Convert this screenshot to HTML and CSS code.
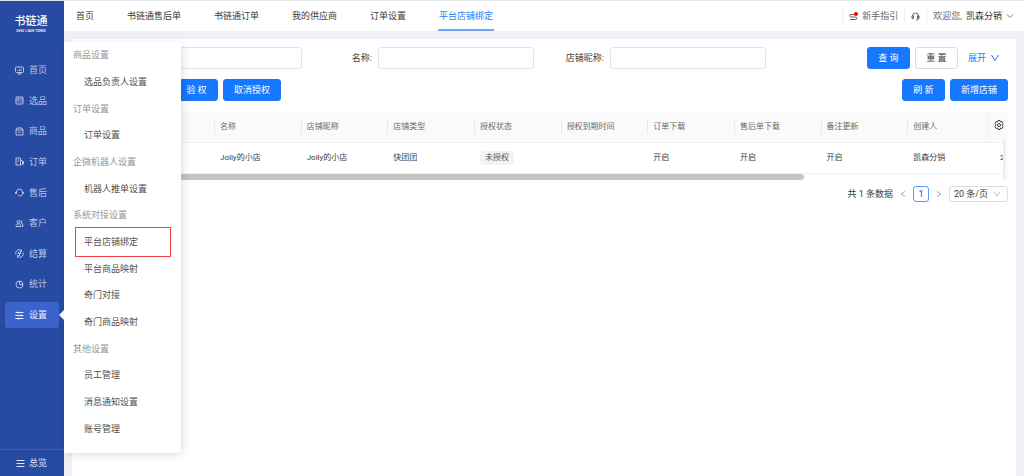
FILE: index.html
```html
<!DOCTYPE html>
<html lang="zh-CN">
<head>
<meta charset="utf-8">
<title>平台店铺绑定</title>
<link rel="stylesheet" href="styles.css">
</head>
<body>
<div class="app">
  <aside class="sidebar">
    <div class="logo"><span class="logo-name">书链通</span><span class="logo-sub">SHU LIAN TONG</span></div>
    <nav class="menu">
      <a class="menu-item" href="#"><svg class="icon" viewBox="0 0 18 18"><rect x="1" y="2" width="16" height="11" rx="2"/><path d="M5 16h8M9 13v3M6 8v2M9 7v3M12 5v5"/></svg>首页</a>
      <a class="menu-item" href="#"><svg class="icon" viewBox="0 0 18 18"><rect x="2" y="2" width="14" height="14" rx="1"/><path d="M2 6h14M5 9h3M5 12h2M9 11l2 2 3-4"/></svg>选品</a>
      <a class="menu-item" href="#"><svg class="icon" viewBox="0 0 18 18"><path d="M4 2h10l2 4v10H2V6zM2 6h14M6 9c1 3 5 3 6 0"/></svg>商品</a>
      <a class="menu-item" href="#"><svg class="icon" viewBox="0 0 18 18"><path d="M2 2h9v14H2zM5 6h3M5 9h2M11 6l4 2v6l-2 2h-2M15 9h2v5h-2"/></svg>订单</a>
      <a class="menu-item" href="#"><svg class="icon" viewBox="0 0 18 18"><path d="M3 11V8a6 6 0 0 1 12 0v3c0 3-2 5-6 5M1 8v3h2M17 8v3h-2M6 13l3 3"/></svg>售后</a>
      <a class="menu-item" href="#"><svg class="icon" viewBox="0 0 18 18"><circle cx="7" cy="6" r="3"/><path d="M2 15c0-7 10-7 10 0zM11 3c4 0 4 5 1 5 3 0 4 3 4 7h-2"/></svg>客户</a>
      <a class="menu-item" href="#"><svg class="icon" viewBox="0 0 18 18"><path d="M2 11a7 7 0 0 1 11-8M16 7a7 7 0 0 1-11 8M13 1v4H9M5 17v-4h4M6 6l3 3 3-3M6 9h6M9 9v4"/></svg>结算</a>
      <a class="menu-item" href="#"><svg class="icon" viewBox="0 0 18 18"><circle cx="9" cy="9" r="7"/><path d="M9 2v7h7"/></svg>统计</a>
      <a class="menu-item active" href="#"><svg class="icon" viewBox="0 0 18 18"><path d="M1 3h16M1 9h16M1 15h16M6 1v4M12 7v4M7 13v4"/></svg>设置</a>
    </nav>
    <a class="overview" href="#"><svg class="icon" viewBox="0 0 18 18"><path d="M1 3h16M1 9h16M1 15h16"/></svg>总览</a>
    <nav class="flyout">
      <span class="group">商品设置</span>
      <a href="#">选品负责人设置</a>
      <span class="group">订单设置</span>
      <a href="#">订单设置</a>
      <span class="group">企微机器人设置</span>
      <a href="#">机器人推单设置</a>
      <span class="group">系统对接设置</span>
      <a class="marked" href="#">平台店铺绑定</a>
      <a href="#">平台商品映射</a>
      <a href="#">奇门对接</a>
      <a href="#">奇门商品映射</a>
      <span class="group">其他设置</span>
      <a href="#">员工管理</a>
      <a href="#">消息通知设置</a>
      <a href="#">账号管理</a>
    </nav>
  </aside>
  <div class="main">
    <header class="topbar">
      <nav class="tabs">
        <a href="#">首页</a>
        <a href="#">书链通售后单</a>
        <a href="#">书链通订单</a>
        <a href="#">我的供应商</a>
        <a href="#">订单设置</a>
        <a class="current" href="#">平台店铺绑定</a>
      </nav>
      <div class="tools">
        <a class="tool" href="#"><svg class="icon" viewBox="0 0 18 18"><path d="M12 5H4a2 2 0 0 0 0 5h9a2 2 0 0 1 0 5H2"/><circle class="dot" cx="14" cy="4" r="4"/></svg>新手指引</a>
        <button class="tool" aria-label="客服"><svg class="icon" viewBox="0 0 18 18"><path d="M3 8a6 6 0 0 1 12 0v5c0 2-2 3-5 3M2 8h3v5H2zM13 8h3v5h-3z"/></svg></button>
        <button class="tool user"><span>欢迎您,</span><strong>凯森分销</strong><svg class="chevron" viewBox="0 0 16 16"><path d="M2 5l6 6 6-6"/></svg></button>
      </div>
    </header>
    <main class="panel">
      <form class="filters">
        <div class="field"><input type="text" aria-label="筛选"></div>
        <div class="field"><label for="name">名称:</label><input id="name" type="text"></div>
        <div class="field"><label for="nick">店铺昵称:</label><input id="nick" type="text"></div>
        <div class="field submit">
          <button class="btn primary" type="button">查 询</button>
          <button class="btn" type="button">重 置</button>
          <a class="expand" href="#">展开<svg class="chevron" viewBox="0 0 16 16"><path d="M1 2l7 11 7-11"/></svg></a>
        </div>
      </form>
      <div class="actions">
        <button class="btn primary">验 权</button>
        <button class="btn primary">取消授权</button>
        <button class="btn primary push">刷 新</button>
        <button class="btn primary">新增店铺</button>
      </div>
      <div class="table-wrap">
        <table>
          <colgroup><col class="col-first"><col span="9"><col class="col-last"></colgroup>
          <thead>
            <tr><th></th><th>名称</th><th>店铺昵称</th><th>店铺类型</th><th>授权状态</th><th>授权到期时间</th><th>订单下载</th><th>售后单下载</th><th>备注更新</th><th>创建人</th><th></th></tr>
          </thead>
          <tbody>
            <tr><td></td><td>Jolly的小店</td><td>Jolly的小店</td><td>快团团</td><td><span class="tag">未授权</span></td><td></td><td>开启</td><td>开启</td><td>开启</td><td>凯森分销</td><td>2</td></tr>
          </tbody>
        </table>
        <div class="scrollbar"><div class="thumb"></div></div>
        <div class="edge"></div>
        <button class="gear" aria-label="列设置"><svg viewBox="0 0 20 20"><path d="M8 1h4l1 3 3-1 2 4-2 3 2 3-2 4-3-1-1 3H8l-1-3-3 1-2-4 2-3-2-3 2-4 3 1z"/><circle cx="10" cy="10" r="3"/></svg></button>
      </div>
      <div class="pagination">
        <span>共 1 条数据</span>
        <button class="arrow" aria-label="上一页"><svg class="chevron" viewBox="0 0 16 16"><path d="M12 3L4 8l8 5"/></svg></button>
        <button class="page">1</button>
        <button class="arrow" aria-label="下一页"><svg class="chevron" viewBox="0 0 16 16"><path d="M4 3l8 5-8 5"/></svg></button>
        <div class="size"><select aria-label="每页条数"><option>20 条/页</option></select><svg class="chevron" viewBox="0 0 16 16"><path d="M2 4l6 8 6-8"/></svg></div>
      </div>
    </main>
  </div>
</div>
</body>
</html>
```
FILE: styles.css
```css
* { box-sizing: border-box; }

body {
  margin: 0;
  border-top: 1px solid #e4e5e8;
  font: 9px/14px Roboto, "Noto Sans CJK SC", sans-serif;
  color: #3c3c3c;
  background: #eef0f5;
}

a { color: inherit; text-decoration: none; }
button, input, select { font: inherit; color: inherit; margin: 0; }
button { background: none; border: 0; padding: 0; }
svg { fill: none; stroke: currentColor; flex: none; }

.app { display: flex; min-height: calc(100vh - 1px); }
.icon { width: 9px; height: 9px; stroke-width: 2; }
.chevron { width: 8px; height: 8px; stroke-width: 2; }

/* Sidebar */
.sidebar {
  position: relative;
  z-index: 2;
  flex: none;
  width: 64px;
  display: flex;
  flex-direction: column;
  background: #274ba3;
  color: #b9c6e6;
}
.logo {
  height: 56px;
  padding-top: 14px;
  padding-right: 2px;
  display: flex;
  flex-direction: column;
  align-items: center;
  color: #fff;
}
.logo-name { font-size: 11px; line-height: 14px; font-weight: 500; }
.logo-sub { font-size: 4px; line-height: 4px; font-weight: 500; }
.menu {
  height: 271px;
  padding: 0 5px;
  display: flex;
  flex-direction: column;
  justify-content: space-between;
}
.menu-item {
  position: relative;
  height: 26px;
  padding-left: 10px;
  display: flex;
  align-items: center;
  gap: 5px;
  border-radius: 3px;
}
.menu-item.active { background: #3b63cc; color: #e8edfa; }
.menu-item.active::after {
  content: "";
  position: absolute;
  right: -5px;
  top: 8px;
  border: 5px solid transparent;
  border-left: 0;
  border-right-color: #fff;
}
.overview {
  margin-top: auto;
  height: 27px;
  padding-left: 16px;
  display: flex;
  align-items: center;
  gap: 4px;
  border-top: 1px solid #3f60b0;
  color: #dfe6f5;
}

.flyout {
  position: absolute;
  left: 64px;
  top: 41px;
  width: 117px;
  height: 411px;
  padding: 0 9px 11px;
  display: grid;
  grid-auto-rows: 1fr;
  align-items: center;
  background: #fff;
  border-radius: 0 3px 3px 0;
  box-shadow: 2px 2px 8px rgba(0, 0, 0, 0.12);
  color: #505050;
}
.flyout .group { color: #969696; }
.flyout a { padding-left: 11px; }
.flyout .marked { position: relative; }
.flyout .marked::after {
  content: "";
  position: absolute;
  inset: -8px 1px -8px 2px;
  border: 1px solid #f04040;
}

/* Top bar */
.main { flex: 1; min-width: 0; display: flex; flex-direction: column; }
.topbar {
  height: 30px;
  display: flex;
  justify-content: space-between;
  padding: 0 10px 0 11px;
  background: #fff;
}
.tabs { display: flex; gap: 31px; }
.tabs a { padding: 8px 1px 0; white-space: nowrap; }
.tabs .current { color: #2a7bf6; border-bottom: 2px solid #6aa5fb; }
.tools { display: flex; align-items: center; color: #666; }
.tool {
  display: flex;
  align-items: center;
  gap: 4px;
  height: 14px;
  padding: 0 6px;
  border-left: 1px solid #eee;
}
.dot { fill: #f00; stroke: none; }
.user { padding-right: 0; }
.user strong { font-weight: 400; color: #333; }
.user .chevron { color: #888; }

/* Content */
.panel { flex: 1; margin: 8px 8px 0; padding: 8px; background: #fff; }
.filters { display: grid; grid-template-columns: repeat(4, 1fr); }
.field {
  display: flex;
  align-items: center;
  justify-content: flex-end;
  gap: 6px;
  padding-right: 10px;
}
.field input {
  width: 156px;
  height: 22px;
  padding: 0 6px;
  border: 1px solid #e4e4e4;
  border-radius: 3px;
  background: #fff;
}
.submit { gap: 5px; padding-right: 9px; }
.expand { display: flex; align-items: center; gap: 5px; margin-left: 5px; color: #2a7bf6; }

.btn {
  height: 22px;
  padding: 0 10px;
  min-width: 43px;
  border: 1px solid #dcdcdc;
  border-radius: 3px;
  background: #fff;
}
.primary { background: #1677ff; border-color: #1677ff; color: #fff; }
.actions { display: flex; gap: 5px; padding: 10px 0 11px 95px; }
.push { margin-left: auto; }

.table-wrap { position: relative; overflow: hidden; font-size: 8px; }
table { width: 100%; table-layout: fixed; border-collapse: separate; border-spacing: 0; }
.col-first { width: 134px; }
.col-last { width: 14px; }
th, td { padding: 0 0 0 6px; text-align: left; white-space: nowrap; overflow: hidden; border-bottom: 1px solid #f0f0f0; }
th {
  height: 31px;
  font-weight: 400;
  color: #6b6b6b;
  background: linear-gradient(#e8e8e8, #e8e8e8) left center / 1px 13px no-repeat #fafafa;
}
th:first-child { background: #fafafa; }
td { height: 31px; }
.tag { display: inline-block; padding: 0 5px; background: #f3f3f3; border-radius: 2px; color: #555; }
.scrollbar { height: 6px; }
.thumb { width: 78%; height: 6px; border-radius: 3px; background: #c4c4c4; }
.edge {
  position: absolute;
  right: 0;
  top: 26px;
  bottom: 0;
  width: 5px;
  background: linear-gradient(to right, #eaeaea, #fff);
}
.gear {
  position: absolute;
  right: 0;
  top: 0;
  width: 20px;
  height: 26px;
  display: flex;
  align-items: center;
  justify-content: center;
  border-left: 1px solid #eee;
  background: #fafafa;
  color: #444;
}
.gear svg { width: 10px; height: 10px; stroke-width: 2; }

.pagination { display: flex; align-items: center; justify-content: flex-end; gap: 6px; padding-top: 6px; }
.arrow { display: flex; width: 8px; color: #aaa; }
.page { width: 16px; height: 16px; border: 1px solid #5a9bfa; border-radius: 3px; color: #2a7bf6; font-weight: 500; line-height: 14px; }
.size { position: relative; }
.size select {
  appearance: none;
  width: 59px;
  height: 16px;
  padding: 0 16px 0 4px;
  border: 1px solid #dedede;
  border-radius: 3px;
  background: #fff;
}
.size .chevron { position: absolute; right: 7px; top: 4px; color: #bbb; pointer-events: none; }
```
